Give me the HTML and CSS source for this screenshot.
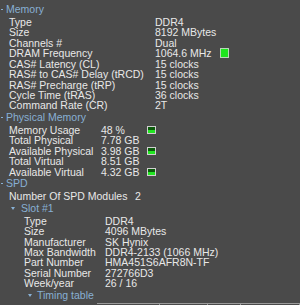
FILE: index.html
```html
<!DOCTYPE html>
<html>
<head>
<meta charset="utf-8">
<link rel="stylesheet" href="styles.css">
</head>
<body>
<div class="panel">
  <div class="hdr"><span class="stub"></span>Memory</div>
  <div class="grid g-mem">
    <span>Type</span><span>DDR4</span>
    <span>Size</span><span>8192 MBytes</span>
    <span>Channels #</span><span>Dual</span>
    <span>DRAM Frequency</span><span class="withled">1064.6 MHz <i class="led full"></i></span>
    <span>CAS# Latency (CL)</span><span>15 clocks</span>
    <span>RAS# to CAS# Delay (tRCD)</span><span>15 clocks</span>
    <span>RAS# Precharge (tRP)</span><span>15 clocks</span>
    <span>Cycle Time (tRAS)</span><span>36 clocks</span>
    <span>Command Rate (CR)</span><span>2T</span>
  </div>
  <div class="hdr"><span class="stub"></span>Physical Memory</div>
  <div class="grid g-phys">
    <span>Memory Usage</span><span>48 %</span><i class="led half"></i>
    <span>Total Physical</span><span>7.78 GB</span><span></span>
    <span>Available Physical</span><span>3.98 GB</span><i class="led half"></i>
    <span>Total Virtual</span><span>8.51 GB</span><span></span>
    <span>Available Virtual</span><span>4.32 GB</span><i class="led half"></i>
  </div>
  <div class="hdr"><span class="stub"></span>SPD</div>
  <div class="grid g-spd">
    <span>Number Of SPD Modules</span><span>2</span>
  </div>
  <div class="hdr sub"><span class="tri"></span>Slot #1</div>
  <div class="grid g-slot">
    <span>Type</span><span>DDR4</span>
    <span>Size</span><span>4096 MBytes</span>
    <span>Manufacturer</span><span>SK Hynix</span>
    <span>Max Bandwidth</span><span>DDR4-2133 (1066 MHz)</span>
    <span>Part Number</span><span>HMA451S6AFR8N-TF</span>
    <span>Serial Number</span><span>272766D3</span>
    <span>Week/year</span><span>26 / 16</span>
  </div>
  <div class="hdr sub2"><span class="tri"></span>Timing table</div>
  <div class="table">
    <span class="col c1"></span><span class="col c2"></span><span class="col c3"></span><span class="col c4"></span>
  </div>
</div>
</body>
</html>
```
FILE: styles.css
```css
html, body {
  margin: 0;
  padding: 0;
  background: #4a4a4a;
}
.panel {
  width: 300px;
  height: 305px;
  overflow: hidden;
  padding-top: 2.8px;
  box-sizing: border-box;
  font-family: "Liberation Sans", Arial, sans-serif;
  font-size: 10.5px;
  color: #e8e8e8;
  background: #4a4a4a;
}
.hdr {
  height: 14px;
  line-height: 13px;
  padding-left: 6px;
  color: #88b0d4;
  display: flex;
  align-items: center;
  box-sizing: border-box;
  padding-bottom: 1px;
  position: relative;
}
.stub {
  position: absolute;
  left: 1px;
  top: 6px;
  width: 2px;
  height: 1px;
  background: #88b0d4;
}
.hdr.sub { padding-left: 21px; }
.hdr.sub2 { padding-left: 37px; }
.tri {
  position: absolute;
  top: 5px;
  width: 0;
  height: 0;
  border-left: 2.5px solid transparent;
  border-right: 2.5px solid transparent;
  border-top: 3px solid #88b0d4;
}
.sub .tri { left: 11px; }
.sub2 .tri { left: 28px; }
.grid {
  display: grid;
  line-height: 10.45px;
  white-space: nowrap;
}
.g-mem { grid-template-columns: 146px auto; padding-left: 9px; }
.g-phys { grid-template-columns: 92px 46px auto; padding-left: 9px; align-items: center; }
.g-spd { grid-template-columns: 126px auto; padding-left: 9px; }
.g-slot { grid-template-columns: 81px auto; padding-left: 24px; }
.withled { display: flex; align-items: center; gap: 8px; }
.led {
  display: block;
  width: 9px;
  height: 10px;
  box-sizing: border-box;
  border: 1px solid #b8d8b8;
  background: #1ee61e;
}
.led.half {
  width: 9px;
  height: 8px;
  background: linear-gradient(#0c5c0c 0 45%, #22e622 45% 100%);
  border-color: #d0d0d0;
}
.table {
  margin-left: 97px;
  height: 20px;
  border-top: 1px solid #9a9a9a;
  display: flex;
}
.col {
  height: 3px;
  border-right: 1px solid #9a9a9a;
}
.c1 { width: 64px; }
.c2 { width: 49px; }
.c3 { width: 34px; }
.c4 { width: 60px; }
```
